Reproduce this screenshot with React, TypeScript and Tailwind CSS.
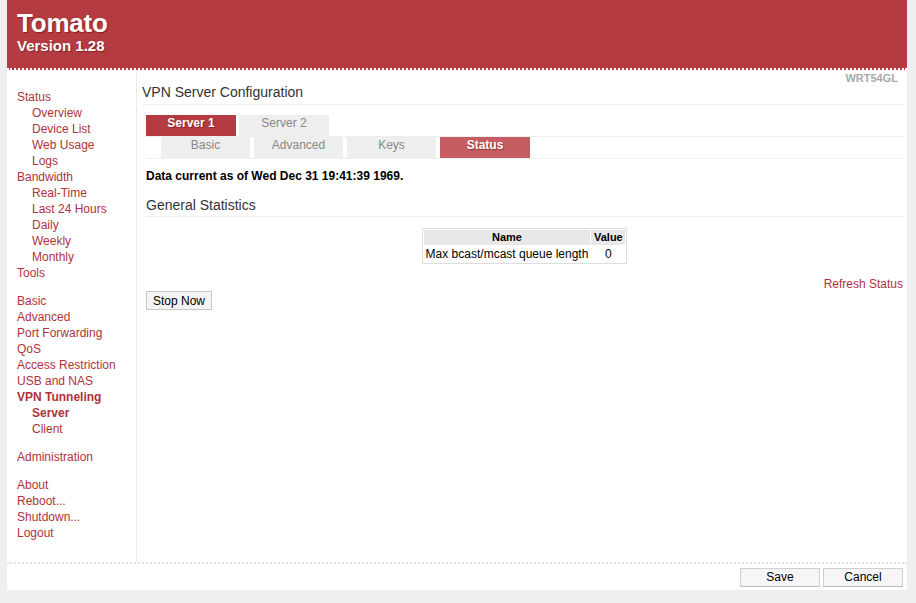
import React from "react";

const red = "text-[#b0323a]";

type Item = { label: string; sub?: boolean; bold?: boolean; gap?: boolean };

const items: Item[] = [
  { label: "Status" },
  { label: "Overview", sub: true },
  { label: "Device List", sub: true },
  { label: "Web Usage", sub: true },
  { label: "Logs", sub: true },
  { label: "Bandwidth" },
  { label: "Real-Time", sub: true },
  { label: "Last 24 Hours", sub: true },
  { label: "Daily", sub: true },
  { label: "Weekly", sub: true },
  { label: "Monthly", sub: true },
  { label: "Tools" },
  { label: "Basic", gap: true },
  { label: "Advanced" },
  { label: "Port Forwarding" },
  { label: "QoS" },
  { label: "Access Restriction" },
  { label: "USB and NAS" },
  { label: "VPN Tunneling", bold: true },
  { label: "Server", sub: true, bold: true },
  { label: "Client", sub: true },
  { label: "Administration", gap: true },
  { label: "About", gap: true },
  { label: "Reboot..." },
  { label: "Shutdown..." },
  { label: "Logout" },
];

export default function App() {
  return (
    <div
      className="min-h-[603px] w-[916px] bg-[#efefef] pl-[7px]"
      style={{ fontFamily: '"Liberation Sans", Arial, Helvetica, sans-serif' }}
    >
      <div className="w-[900px] bg-white pb-[3px]">
        {/* Header */}
        <div className="h-[70px] bg-[#b33b41] border-b-2 border-dotted border-white pl-[10px] pt-[9px] text-white font-bold [text-shadow:1px_1px_1px_rgba(80,0,0,0.45)]">
          <div className="text-[26px] leading-[29px] tracking-[-0.2px]">Tomato</div>
          <div className="text-[15px] leading-[16px]">Version 1.28</div>
        </div>

        {/* Main */}
        <div className="flex h-[492px]">
          <div className="w-[130px] shrink-0 border-r border-[#ebebeb] pt-[19px] text-[12px] leading-[16px]">
            {items.map((it) => (
              <div
                key={it.label}
                className={`${red} ${it.sub ? "pl-[25px]" : "pl-[10px]"} ${it.bold ? "font-bold" : ""} ${it.gap ? "mt-[12px]" : ""}`}
              >
                {it.label}
              </div>
            ))}
          </div>

          <div className="flex-1 pl-[5px] pr-[4px]">
            <div className="h-[15px] pt-[2px] text-right pr-[5px] text-[11px] leading-[12px] font-bold text-[#aaaaaa]">
              WRT54GL
            </div>
            <div className="text-[14px] leading-[14px] pb-[5px] border-b border-[#eeeeee] text-[#333]">
              VPN Server Configuration
            </div>

            <div className="pl-[4px]">
              <div className="mt-[10px] flex gap-[3px] border-b border-[#eeeeee]">
                <div className="w-[90px] h-[21px] bg-[#b33b41] text-white font-bold text-[12px] leading-[17px] text-center [text-shadow:1px_1px_1px_rgba(80,0,0,0.4)]">
                  Server 1
                </div>
                <div className="w-[90px] h-[21px] bg-[#eeeeee] text-[#888] text-[12px] leading-[17px] text-center">
                  Server 2
                </div>
              </div>
              <div className="flex gap-[4px] pl-[15px] border-b border-[#eeeeee]">
                {["Basic", "Advanced", "Keys"].map((t) => (
                  <div
                    key={t}
                    className="w-[89px] h-[21px] bg-[#eeeeee] text-[#888] text-[12px] leading-[17px] text-center"
                  >
                    {t}
                  </div>
                ))}
                <div className="w-[90px] h-[21px] bg-[#c45c61] text-white font-bold text-[12px] leading-[17px] text-center [text-shadow:1px_1px_1px_rgba(80,0,0,0.4)]">
                  Status
                </div>
              </div>

              <div className="mt-[10px] text-[12px] leading-[14px] font-bold text-black">
                Data current as of Wed Dec 31 19:41:39 1969.
              </div>

              <div className="mt-[15px] text-[14px] leading-[14px] pb-[4px] border-b border-[#eeeeee] text-[#333]">
                General Statistics
              </div>

              <div className="mt-[11px] flex justify-center">
                <table className="border border-[#dddddd] border-separate border-spacing-[1px] text-black">
                  <thead>
                    <tr>
                      <th className="w-[166px] bg-[#e8e8e8] text-[11px] leading-[15px] font-bold p-0">Name</th>
                      <th className="w-[34px] bg-[#e8e8e8] text-[11px] leading-[15px] font-bold p-0">Value</th>
                    </tr>
                  </thead>
                  <tbody>
                    <tr>
                      <td className="text-[12px] leading-[16px] px-[2px] p-0 whitespace-nowrap">Max bcast/mcast queue length</td>
                      <td className="text-[12px] leading-[16px] text-center p-0">0</td>
                    </tr>
                  </tbody>
                </table>
              </div>

              <div className={`mt-[12px] text-right text-[12px] leading-[16px] ${red}`}>Refresh Status</div>
              <button className="-mt-[1px] block w-[66px] h-[19px] bg-[#f4f4f4] border border-[#c8c8c8] text-[12px] leading-[16px] text-black">
                Stop Now
              </button>
            </div>
          </div>
        </div>

        {/* Footer */}
        <div className="border-t-2 border-dotted border-[#e4e4e4] flex justify-end gap-[3px] pt-[4px] pr-[4px]">
          <button className="w-[80px] h-[19px] bg-[#f6f6f6] border border-[#cfcfcf] border-b-[#bbbbbb] text-[12px] leading-[15px] text-black">
            Save
          </button>
          <button className="w-[80px] h-[19px] bg-[#f6f6f6] border border-[#cfcfcf] border-b-[#bbbbbb] text-[12px] leading-[15px] text-black">
            Cancel
          </button>
        </div>
      </div>
    </div>
  );
}
